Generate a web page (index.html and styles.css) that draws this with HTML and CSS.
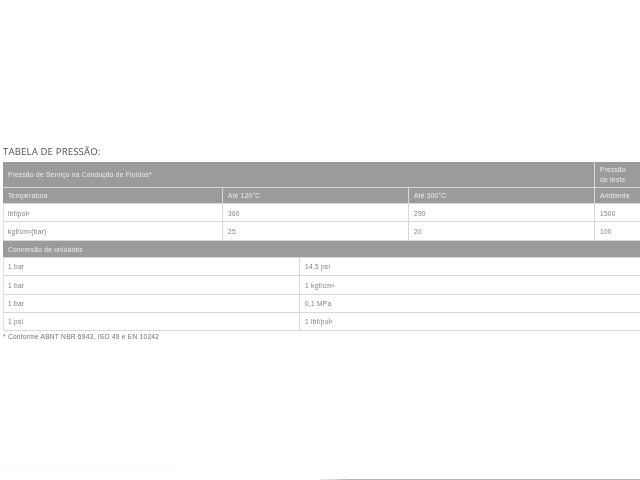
FILE: index.html
```html
<!DOCTYPE html>
<html lang="pt">
<head>
<meta charset="utf-8">
<title>Tabela de pressão</title>
<link rel="stylesheet" href="styles.css">
</head>
<body>
<main class="content">
  <h2 class="title">TABELA DE PRESSÃO:</h2>
  <div class="grid-service">
    <div class="cell head span-3 h-top">Pressão de Serviço na Condução de Fluídos*</div>
    <div class="cell head h-top stacked">Pressão<br>de teste</div>
    <div class="cell head h-sub">Temperatura</div>
    <div class="cell head h-sub">Até 120°C</div>
    <div class="cell head h-sub">Até 300°C</div>
    <div class="cell head h-sub">Ambiente</div>
    <div class="cell body first r1">lbf/pol²</div>
    <div class="cell body r1">360</div>
    <div class="cell body r1">290</div>
    <div class="cell body r1">1500</div>
    <div class="cell body first r2">kgf/cm²(bar)</div>
    <div class="cell body r2">25</div>
    <div class="cell body r2">20</div>
    <div class="cell body r2">100</div>
  </div>
  <div class="grid-units">
    <div class="cell head span-2 h-conv">Conversão de unidades</div>
    <div class="cell body first u1">1 bar</div><div class="cell body last u1">14,5 psi</div>
    <div class="cell body first u2">1 bar</div><div class="cell body last u2">1 kgf/cm²</div>
    <div class="cell body first u3">1 bar</div><div class="cell body last u3">0,1 MPa</div>
    <div class="cell body first u4">1 psi</div><div class="cell body last u4">1 lbf/pol²</div>
  </div>
  <p class="note">* Conforme ABNT NBR 6943, ISO 49 e EN 10242</p>
</main>
<footer class="foot">
  <div class="foot-ghost"></div>
  <div class="foot-line"></div>
</footer>
</body>
</html>
```
FILE: styles.css
```css
html, body {
  margin: 0;
  height: 100%;
  overflow: hidden;
  background: #fff;
}
body {
  display: flex;
  flex-direction: column;
  justify-content: space-between;
  font-family: "Liberation Sans", Arial, sans-serif;
}
.content {
  padding: 146px 0 0 3px;
  filter: blur(0.45px);
}
.title {
  margin: 0 0 4px;
  height: 12px;
  font: 400 9.6px/12px "Open Sans", sans-serif;
  color: #505050;
  letter-spacing: 0.15px;
}
.grid-service,
.grid-units {
  display: grid;
  width: 640px;
  box-sizing: border-box;
}
.grid-service {
  grid-template-columns: 220px 186px 186px 48px;
}
.grid-units {
  grid-template-columns: 297px 343px;
}
.cell {
  box-sizing: border-box;
  display: flex;
  align-items: center;
  padding-left: 5px;
  font-size: 6.6px;
  letter-spacing: 0.25px;
  border-right: 1px solid #d8d8d8;
  border-bottom: 1px solid #d8d8d8;
}
.head {
  background: #9b9b9b;
  color: #eeeeee;
}
.body {
  background: #fff;
  color: #808080;
}
.first { box-shadow: inset 1px 0 0 #e2e2e2; }
.last { border-right: 0; }
.span-3 { grid-column: span 3; }
.span-2 { grid-column: span 2; }
.stacked {
  line-height: 10px;
}
.h-top { height: 26px; }
.h-sub { height: 16px; }
.r1 { height: 18px; padding-top: 1px; }
.r2 { height: 19px; }
.h-conv { height: 17px; border-right: 0; }
.u1 { height: 18px; }
.u2 { height: 19px; }
.u3 { height: 18px; }
.u4 { height: 18px; }
.note {
  margin: 2px 0 0;
  font-size: 6.6px;
  line-height: 7px;
  letter-spacing: 0.25px;
  color: #707070;
}
.foot {
  display: flex;
  justify-content: space-between;
  align-items: flex-end;
  height: 18px;
}
.foot-ghost {
  width: 175px;
  height: 12px;
  margin-bottom: 5px;
  background: linear-gradient(#fcfcfc, #feffff);
}
.foot-line {
  width: 320px;
  height: 1px;
  background: linear-gradient(90deg, #eee, #b4b4b4 30px, #b4b4b4);
}
```
